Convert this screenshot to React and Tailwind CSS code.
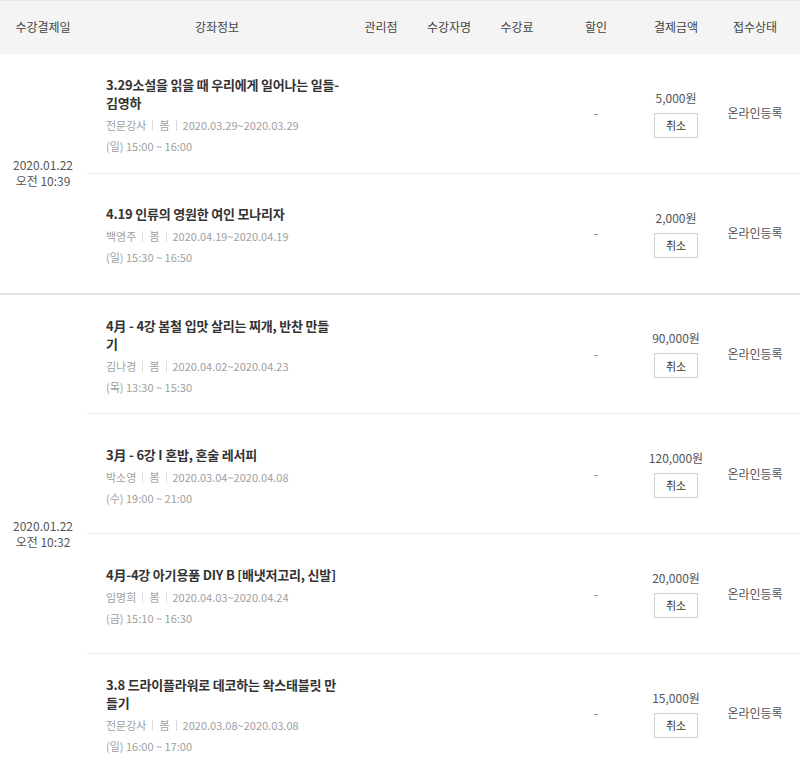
const groups = [
  {
    date: "2020.01.22",
    time: "오전 10:39",
    items: [
      {
        title: "3.29소설을 읽을 때 우리에게 일어나는 일들-김영하",
        teacher: "전문강사",
        term: "2020.03.29~2020.03.29",
        hours: "(일) 15:00 ~ 16:00",
        price: "5,000원",
      },
      {
        title: "4.19 인류의 영원한 여인 모나리자",
        teacher: "백영주",
        term: "2020.04.19~2020.04.19",
        hours: "(일) 15:30 ~ 16:50",
        price: "2,000원",
      },
    ],
  },
  {
    date: "2020.01.22",
    time: "오전 10:32",
    items: [
      {
        title: "4月 - 4강 봄철 입맛 살리는 찌개, 반찬 만들기",
        teacher: "김나경",
        term: "2020.04.02~2020.04.23",
        hours: "(목) 13:30 ~ 15:30",
        price: "90,000원",
      },
      {
        title: "3月 - 6강 I 혼밥, 혼술 레서피",
        teacher: "박소영",
        term: "2020.03.04~2020.04.08",
        hours: "(수) 19:00 ~ 21:00",
        price: "120,000원",
      },
      {
        title: "4月-4강 아기용품 DIY B [배냇저고리, 신발]",
        teacher: "임명희",
        term: "2020.04.03~2020.04.24",
        hours: "(금) 15:10 ~ 16:30",
        price: "20,000원",
      },
      {
        title: "3.8 드라이플라워로 데코하는 왁스태블릿 만들기",
        teacher: "전문강사",
        term: "2020.03.08~2020.03.08",
        hours: "(일) 16:00 ~ 17:00",
        price: "15,000원",
      },
    ],
  },
];

const heads = ["수강결제일", "강좌정보", "관리점", "수강자명", "수강료", "할인", "결제금액", "접수상태"];

export default function App() {
  return (
    <div
      className="w-[800px] bg-white text-[#333]"
      style={{ fontFamily: '"Noto Sans CJK KR", "Noto Sans", sans-serif' }}
    >
      <table className="w-[800px] table-fixed border-collapse">
        <colgroup>
          <col className="w-[86px]" />
          <col className="w-[262px]" />
          <col className="w-[66px]" />
          <col className="w-[70px]" />
          <col className="w-[66px]" />
          <col className="w-[92px]" />
          <col className="w-[68px]" />
          <col className="w-[90px]" />
        </colgroup>
        <thead>
          <tr className="h-[53px] border-t border-[#e6e6e6] bg-[#f4f4f4]">
            {heads.map((h) => (
              <th key={h} className="p-0 text-center text-[12px] font-normal text-[#444]">
                {h}
              </th>
            ))}
          </tr>
        </thead>
        <tbody>
          {groups.map((g, gi) =>
            g.items.map((it, i) => {
              const last = i === g.items.length - 1;
              const rowBorder = last ? "border-b-2 border-[#e4e4e4]" : "border-b border-[#ededed]";
              return (
                <tr key={gi + "-" + i} className="h-[120px]">
                  {i === 0 && (
                    <td
                      rowSpan={g.items.length}
                      className="border-b-2 border-[#e4e4e4] p-0 text-center align-middle text-[12px] leading-[16px] text-[#555]"
                    >
                      <div>{g.date}</div>
                      <div>{g.time}</div>
                    </td>
                  )}
                  <td className={`${rowBorder} pt-[7px] pb-0 pl-5 pr-0 align-middle`}>
                    <div className="w-[234px] text-[13px] font-bold leading-[18px] tracking-[-0.2px] text-[#333]">
                      {it.title}
                    </div>
                    <div className="mt-[3px] flex items-center text-[11px] leading-[21px] text-[#a0a0a0]">
                      <span>{it.teacher}</span>
                      <span className="mx-[6px] h-[11px] w-px bg-[#dddddd]" />
                      <span>봄</span>
                      <span className="mx-[6px] h-[11px] w-px bg-[#dddddd]" />
                      <span>{it.term}</span>
                    </div>
                    <div className="text-[11px] leading-[21px] text-[#a0a0a0]">{it.hours}</div>
                  </td>
                  <td className={rowBorder} />
                  <td className={rowBorder} />
                  <td className={rowBorder} />
                  <td className={`${rowBorder} text-center align-middle text-[12px] text-[#777]`}>-</td>
                  <td className={`${rowBorder} text-center align-middle`}>
                    <div className="text-[12px] leading-[18px] text-[#555]">{it.price}</div>
                    <button
                      type="button"
                      className="mx-auto mt-[6px] flex h-[25px] w-[44px] items-center justify-center border border-[#cfcfcf] bg-white text-[11px] text-[#333]"
                    >
                      취소
                    </button>
                  </td>
                  <td className={`${rowBorder} text-center align-middle text-[12px] text-[#555]`}>
                    온라인등록
                  </td>
                </tr>
              );
            })
          )}
        </tbody>
      </table>
    </div>
  );
}
